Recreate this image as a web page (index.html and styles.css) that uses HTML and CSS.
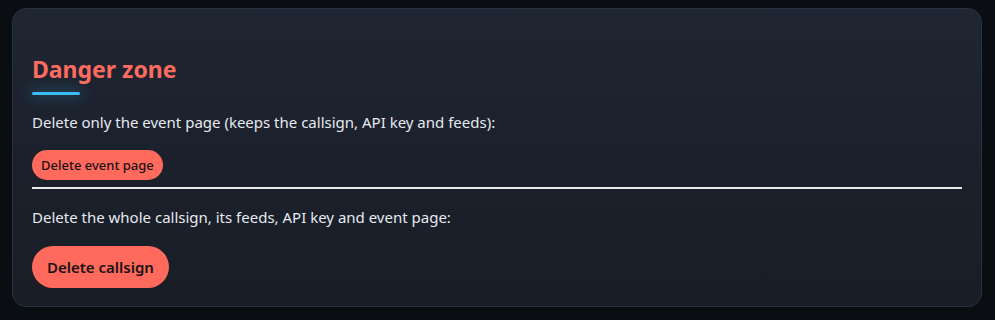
FILE: index.html
```html
<!DOCTYPE html>
<html>
<head>
<meta charset="utf-8">
<link rel="stylesheet" href="styles.css">
</head>
<body>
<section class="card">
  <h2 class="title">Danger zone</h2>
  <div class="accent"></div>
  <p class="desc">Delete only the event page (keeps the callsign, API key and feeds):</p>
  <button class="btn btn-sm">Delete event page</button>
  <hr class="sep">
  <p class="desc desc-after">Delete the whole callsign, its feeds, API key and event page:</p>
  <button class="btn btn-lg">Delete callsign</button>
</section>
</body>
</html>
```
FILE: styles.css
```css
html, body {
  margin: 0;
  background: #0a0d12;
}
body {
  padding: 8px 13px 13px 12px;
  font-family: "Noto Sans", "Open Sans", sans-serif;
  color: #e6e9ef;
}
.card {
  background: linear-gradient(180deg, #1f2532 0%, #181d26 100%);
  border: 1px solid #26333d;
  border-radius: 14px;
  padding: 45px 19px 18px 19px;
  display: flex;
  flex-direction: column;
  align-items: flex-start;
}
.title {
  margin: 0;
  font-size: 23px;
  font-weight: 700;
  color: #ff6b5f;
  line-height: 30px;
}
.accent {
  width: 48px;
  height: 3px;
  margin-top: 8px;
  background: #38bdf8;
  border-radius: 2px;
  box-shadow: 0 0 14px 4px rgba(56, 189, 248, 0.18);
}
.desc {
  margin: 16px 0 0 0;
  font-size: 15px;
  line-height: 22px;
}
.desc-after {
  margin-top: 17px;
}
.btn {
  border: none;
  background: #ff6a5d;
  color: #1a1214;
  font-family: "Noto Sans", "Open Sans", sans-serif;
  border-radius: 999px;
  cursor: pointer;
}
.btn-sm {
  margin-top: 17px;
  font-size: 13px;
  font-weight: 500;
  height: 30px;
  padding: 0 9px;
}
.btn-lg {
  margin-top: 18px;
  font-size: 15px;
  font-weight: 600;
  height: 42px;
  padding: 0 15px;
}
.sep {
  align-self: stretch;
  margin: 7px 0 0 0;
  border: none;
  height: 2px;
  background: #e8e8e8;
}
```
